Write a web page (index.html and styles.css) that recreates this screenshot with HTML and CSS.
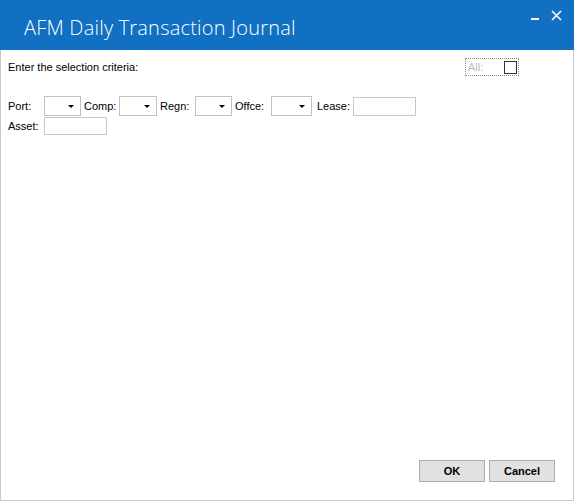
FILE: index.html
```html
<!DOCTYPE html>
<html>
<head>
<meta charset="utf-8">
<link rel="stylesheet" href="styles.css">
</head>
<body>
<div class="window">
  <div class="titlebar">
    <div class="title">AFM Daily Transaction Journal</div>
    <div class="controls">
      <span class="min"></span>
      <svg class="close" width="11" height="11" viewBox="0 0 11 11"><path d="M1 1L10 10M10 1L1 10" stroke="#fff" stroke-width="1.6"/></svg>
    </div>
  </div>
  <div class="content">
    <div class="header-row">
      <span class="prompt">Enter the selection criteria:</span>
      <div class="all-box">
        <span class="all-label">All:</span>
        <span class="checkbox"></span>
      </div>
    </div>
    <div class="row row1">
      <span class="lbl w36">Port:</span>
      <span class="combo w37"><i class="arrow"></i></span>
      <span class="lbl w35 ml3">Comp:</span>
      <span class="combo w38"><i class="arrow"></i></span>
      <span class="lbl w35 ml3">Regn:</span>
      <span class="combo w37"><i class="arrow"></i></span>
      <span class="lbl w36 ml3">Offce:</span>
      <span class="combo w41"><i class="arrow"></i></span>
      <span class="lbl w36 ml5">Lease:</span>
      <span class="textbox w63"></span>
    </div>
    <div class="row row2">
      <span class="lbl w36">Asset:</span>
      <span class="textbox w63"></span>
    </div>
  </div>
  <div class="footer">
    <button class="btn">OK</button>
    <button class="btn">Cancel</button>
  </div>
</div>
</body>
</html>
```
FILE: styles.css
```css
html, body {
  margin: 0;
  padding: 0;
  background: #ffffff;
}
.window {
  width: 574px;
  height: 501px;
  box-sizing: border-box;
  border: 1px solid #c9c9c9;
  border-top: none;
  display: flex;
  flex-direction: column;
  background: #fff;
  font-family: "Liberation Sans", Arial, sans-serif;
  font-size: 11px;
  color: #000;
}
.titlebar {
  height: 50px;
  margin: 0 -1px;
  background: #1170c1;
  display: flex;
  justify-content: space-between;
  flex-shrink: 0;
}
.title {
  font-family: "Open Sans", "Noto Sans", sans-serif;
  font-weight: 300;
  font-size: 20px;
  color: #fff;
  padding-left: 24px;
  padding-top: 14px;
  letter-spacing: 0.2px;
}
.controls {
  display: flex;
  align-items: flex-start;
  padding-top: 10px;
  padding-right: 12px;
  gap: 12px;
}
.min {
  display: block;
  width: 8px;
  height: 2px;
  background: #fff;
  margin-top: 8px;
}
.close {
  display: block;
  margin-top: 0px;
}
.content {
  flex: 1;
  padding: 0 7px 0 7px;
}
.header-row {
  display: flex;
  justify-content: space-between;
  align-items: center;
  margin-top: 7px;
  height: 20px;
}
.prompt {
  line-height: 13px;
}
.all-box {
  width: 54px;
  height: 18px;
  box-sizing: border-box;
  border: 1px dotted #8a8a8a;
  margin-right: 47px;
  display: flex;
  align-items: center;
  justify-content: space-between;
  padding: 0 1px 0 2px;
}
.all-label {
  color: #b8b8b8;
}
.checkbox {
  width: 13px;
  height: 13px;
  box-sizing: border-box;
  border: 1px solid #333;
  background: #fff;
}
.row {
  display: flex;
  align-items: center;
}
.row1 {
  margin-top: 19px;
}
.row2 {
  margin-top: 1px;
}
.lbl {
  display: block;
  white-space: nowrap;
}
.w35 { width: 35px; }
.w36 { width: 36px; }
.w37 { width: 37px; }
.w38 { width: 38px; }
.w41 { width: 41px; }
.w63 { width: 63px; }
.ml3 { margin-left: 3px; }
.ml5 { margin-left: 5px; }
.combo {
  height: 20px;
  box-sizing: border-box;
  border: 1px solid #c2c2c2;
  background: #fff;
  position: relative;
  display: block;
}
.arrow {
  position: absolute;
  right: 6px;
  top: 8px;
  width: 0;
  height: 0;
  border-left: 3px solid transparent;
  border-right: 3px solid transparent;
  border-top: 3px solid #000;
}
.textbox {
  display: block;
  height: 19px;
  box-sizing: border-box;
  border: 1px solid #c8c8c8;
  background: #fff;
}
.row2 .textbox {
  height: 18px;
}
.footer {
  display: flex;
  justify-content: flex-end;
  gap: 4px;
  padding: 0 18px 18px 0;
}
.btn {
  width: 66px;
  height: 22px;
  box-sizing: border-box;
  background: #e1e1e1;
  border: 1px solid #adadad;
  font-family: "Liberation Sans", Arial, sans-serif;
  font-size: 11px;
  font-weight: bold;
  color: #000;
  padding: 0;
  margin: 0;
}
```
